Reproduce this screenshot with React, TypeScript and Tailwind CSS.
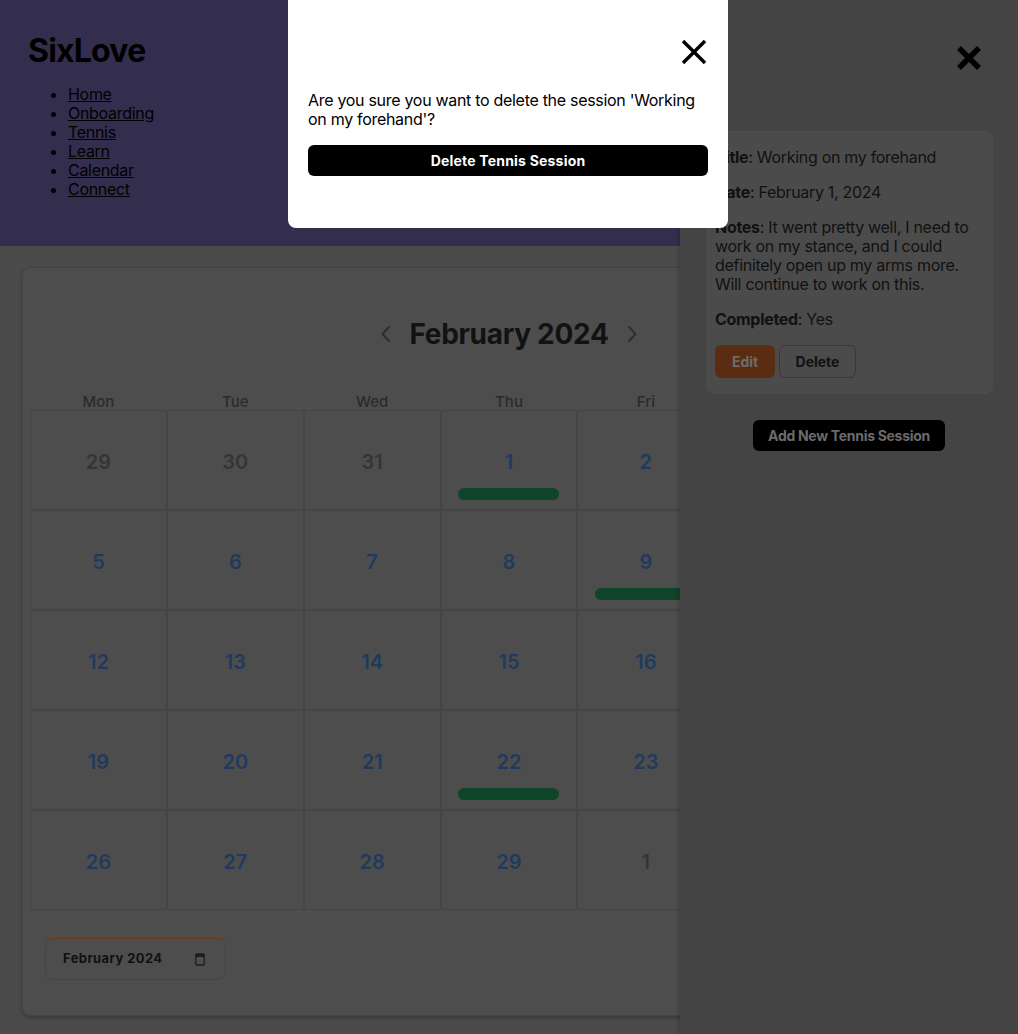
import React from "react";

const FONT = { fontFamily: "Inter, 'Noto Sans', sans-serif" };

const NAV = ["Home", "Onboarding", "Tennis", "Learn", "Calendar", "Connect"];
const WEEKDAYS = ["Mon", "Tue", "Wed", "Thu", "Fri", "Sat", "Sun"];

type Day = { n: number; muted?: boolean; bar?: "one" | "two" };

const WEEKS: Day[][] = [
  [{ n: 29, muted: true }, { n: 30, muted: true }, { n: 31, muted: true }, { n: 1, bar: "one" }, { n: 2 }, { n: 3 }, { n: 4 }],
  [{ n: 5 }, { n: 6 }, { n: 7 }, { n: 8 }, { n: 9, bar: "two" }, { n: 10 }, { n: 11 }],
  [{ n: 12 }, { n: 13 }, { n: 14 }, { n: 15 }, { n: 16 }, { n: 17 }, { n: 18 }],
  [{ n: 19 }, { n: 20 }, { n: 21 }, { n: 22, bar: "one" }, { n: 23 }, { n: 24 }, { n: 25 }],
  [{ n: 26 }, { n: 27 }, { n: 28 }, { n: 29 }, { n: 1, muted: true }, { n: 2, muted: true }, { n: 3, muted: true }],
];

function Chevron({ dir }: { dir: "left" | "right" }) {
  return (
    <svg width="12" height="18" viewBox="0 0 12 18" fill="none">
      <path
        d={dir === "left" ? "M9 2 2.5 9 9 16" : "M3 2 9.5 9 3 16"}
        stroke="#2e2e2e"
        strokeWidth="2"
        strokeLinecap="round"
        strokeLinejoin="round"
      />
    </svg>
  );
}

function DayCell({ day }: { day: Day }) {
  return (
    <div className="relative flex h-[100px] flex-col items-center border border-[#454545] pt-[37px]">
      <span
        className={`text-[20px] font-semibold leading-[28px] ${day.muted ? "text-[#353535]" : "text-[#1f3a5e]"}`}
      >
        {day.n}
      </span>
      {day.bar === "one" && (
        <div className="mt-3 h-[12px] w-[101px] rounded-full bg-[#0f4529]" />
      )}
      {day.bar === "two" && (
        <div className="absolute left-[17px] top-[77px] h-[12px] w-[238px] rounded-full bg-[#0f4529]" />
      )}
    </div>
  );
}

export default function App() {
  return (
    <div className="relative min-h-[1034px] w-full overflow-hidden bg-[#4b4b4b] text-black" style={FONT}>
      <header className="h-[246px] bg-[#342e4e] pl-[28px] pt-[31px]">
        <h1 className="text-[32px] font-bold leading-[39px] tracking-[-0.8px] text-black">SixLove</h1>
        <ul className="mt-[15px] list-disc pl-10 text-[16px] leading-[19px] tracking-[-0.3px]">
          {NAV.map((item) => (
            <li key={item}>
              <a href="#" className="underline">
                {item}
              </a>
            </li>
          ))}
        </ul>
      </header>

      <main className="px-[22px] pt-[21px] pb-[18px]">
        <div className="rounded-lg border border-[#444444] bg-[#4d4d4d] px-[7px] pt-[49px] pb-[35px] shadow-[0_2px_4px_rgba(0,0,0,0.25)]">
          <div className="flex h-[34px] items-center justify-center gap-[17px]">
            <Chevron dir="left" />
            <h2 className="text-[28px] font-bold leading-[34px] tracking-[-0.3px] text-[#121212]">February 2024</h2>
            <Chevron dir="right" />
          </div>
          <div className="mt-[39px] grid grid-cols-7">
            {WEEKDAYS.map((d) => (
              <div key={d} className="h-[20px] text-center text-[15px] font-medium leading-[24px] text-[#2b2b2b]">
                {d}
              </div>
            ))}
          </div>
          <div className="grid grid-cols-7">
            {WEEKS.flat().map((day, i) => (
              <DayCell key={i} day={day} />
            ))}
          </div>
          <div className="ml-[15px] mt-[28px] flex h-[42px] w-[181px] items-center justify-between rounded-lg border border-[#6b3a18] pl-[17px] pr-[20px]">
            <span className="text-[13px] font-bold tracking-[0.4px] text-[#111111]">February 2024</span>
            <svg width="10" height="13" viewBox="0 0 10 13" fill="none">
              <rect x="0.75" y="1" width="8.5" height="11" rx="1.2" stroke="#1d1d1d" strokeWidth="1.3" />
              <rect x="0.75" y="1" width="8.5" height="3" fill="#1d1d1d" />
            </svg>
          </div>
        </div>
      </main>

      {/* session drawer */}
      <aside className="absolute right-0 top-0 z-10 flex h-full w-[338px] flex-col items-center bg-[#444444] shadow-[-2px_0_4px_rgba(0,0,0,0.15)]">
        <div className="flex w-full justify-end pr-[36px] pt-[45px]">
          <svg width="26" height="26" viewBox="0 0 26 26">
            <path d="M3 3 23 23M23 3 3 23" stroke="#000" strokeWidth="5.5" />
          </svg>
        </div>
        <div className="ml-[26px] mt-[60px] w-[287px] self-start rounded-lg bg-[#4b4b4b] px-[9px] pt-[17px] pb-4 text-[16px] leading-[19px] tracking-[-0.3px] text-[#111111]">
          <p>
            <b>Title</b>: Working on my forehand
          </p>
          <p className="mt-4">
            <b>Date</b>: February 1, 2024
          </p>
          <p className="mt-4">
            <b>Notes</b>: It went pretty well, I need to work on my stance, and I could definitely open up my arms
            more. Will continue to work on this.
          </p>
          <p className="mt-4">
            <b>Completed</b>: Yes
          </p>
          <div className="mt-4 flex gap-1 tracking-normal">
            <button className="h-[33px] w-[60px] rounded-md bg-[#5a2c12] text-[14px] font-bold text-[#6c6c6c]">
              Edit
            </button>
            <button className="h-[33px] w-[77px] rounded-md border-[1.5px] border-[#6a1f3c] text-[14px] font-bold text-[#111111]">
              Delete
            </button>
          </div>
        </div>
        <button className="mt-[26px] h-[31px] w-[192px] rounded-md bg-black text-[14px] font-bold tracking-[-0.3px] text-[#6b6b6b]">
          Add New Tennis Session
        </button>
      </aside>

      {/* confirm dialog */}
      <div className="absolute left-[288px] top-0 z-20 w-[440px] rounded-b-lg bg-white px-5 pt-[38px] pb-[52px]">
        <div className="flex justify-end">
          <svg width="28" height="28" viewBox="0 0 28 28">
            <path d="M3 3 25 25M25 3 3 25" stroke="#000" strokeWidth="3.4" />
          </svg>
        </div>
        <p className="mt-[25px] text-[16px] leading-[19px] tracking-[-0.3px] text-black">
          Are you sure you want to delete the session 'Working on my forehand'?
        </p>
        <button className="mt-[16px] h-[31px] w-full rounded-md bg-black text-[14px] font-bold tracking-[0.2px] text-white">
          Delete Tennis Session
        </button>
      </div>
    </div>
  );
}
